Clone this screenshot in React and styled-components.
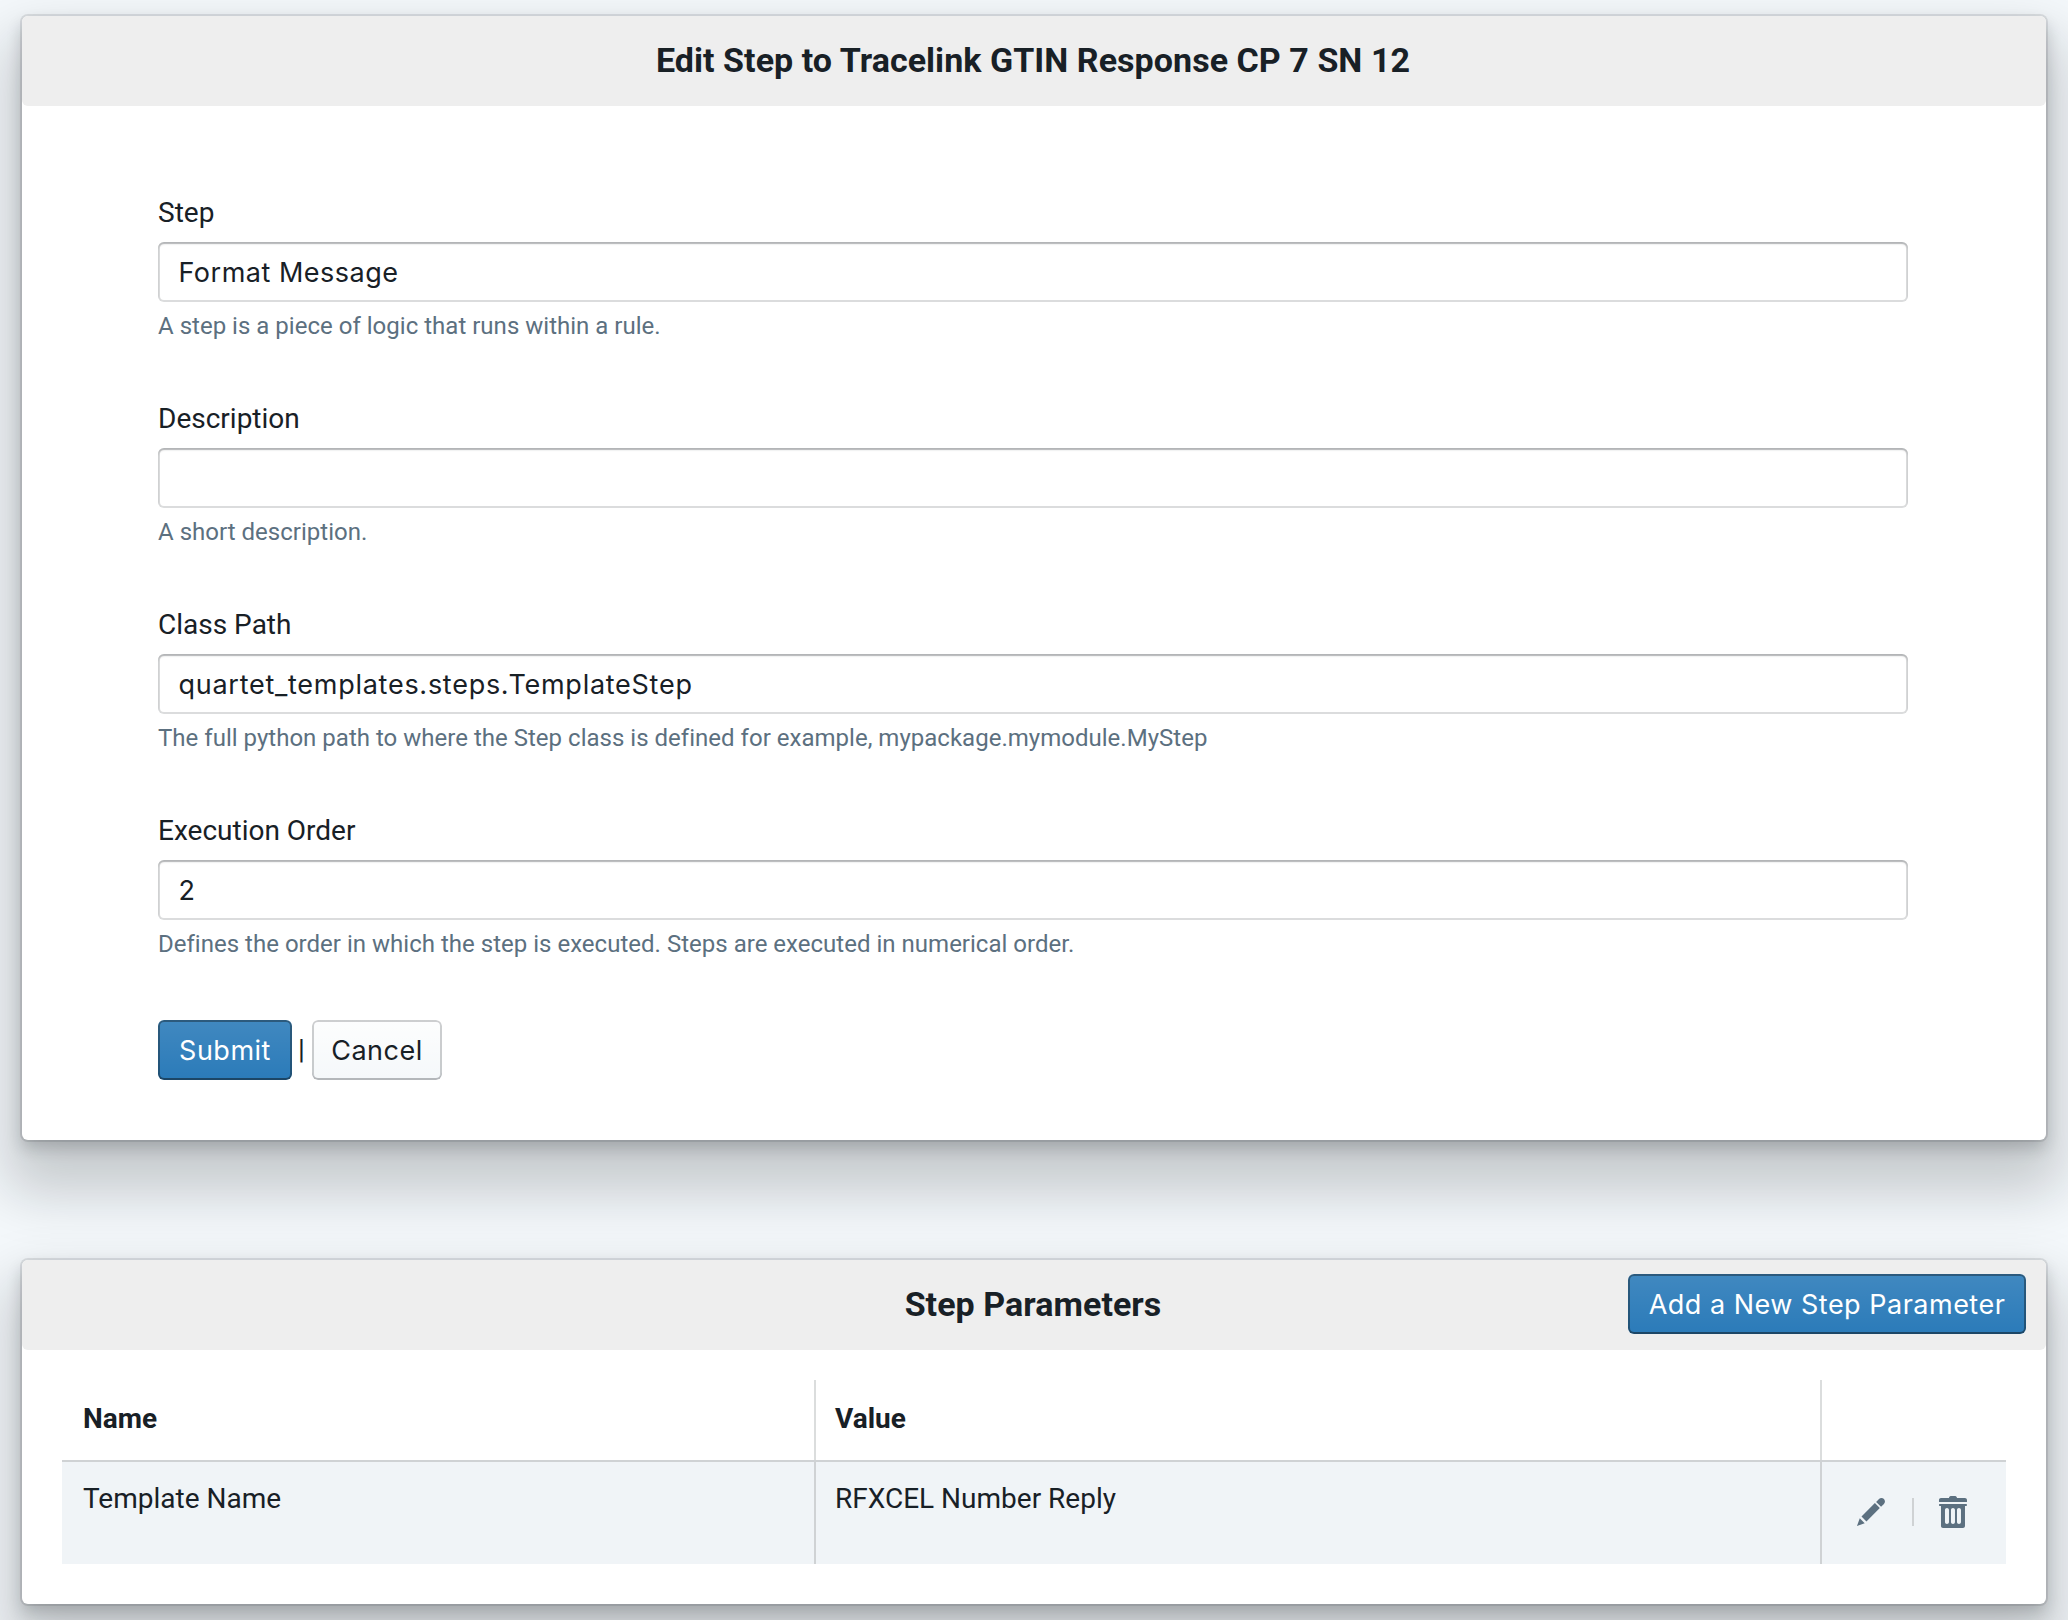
import React from "react";
import styled, { createGlobalStyle, css } from "styled-components";

const GlobalStyle = createGlobalStyle`
  *, *::before, *::after { box-sizing: border-box; }
  body {
    margin: 0;
    background: #f4f8fb;
    color: #182026;
    font-family: Roboto, "Noto Sans", sans-serif;
    font-size: 28px;
    line-height: 36px;
  }
`;

const Page = styled.main`
  display: flex;
  flex-direction: column;
  gap: 120px;
  height: 1620px;
  padding: 16px 22px 0;
  overflow: hidden;
`;

const Card = styled.section`
  flex: none;
  height: ${(p) => p.$height}px;
  border-radius: 6px;
  background: #fff;
  box-shadow:
    0 0 0 2px rgba(16, 22, 26, 0.1),
    0 8px 16px rgba(16, 22, 26, 0.2),
    0 36px 56px 16px rgba(16, 22, 26, 0.2);
`;

const CardHeader = styled.header`
  display: grid;
  grid-template-columns: 1fr auto 1fr;
  align-items: center;
  height: 90px;
  padding: 0 20px 2px;
  border-radius: 6px;
  background: #eee;
`;

const Title = styled.h5`
  grid-column: 2;
  margin: 0 2px 0 0;
  font-size: 34px;
  line-height: 40px;
  font-weight: 700;
  letter-spacing: 0.05px;
`;

const HeaderAction = styled.div`
  display: flex;
  justify-content: flex-end;
`;

const Form = styled.form`
  padding: 88px 138px 0 136px;
`;

const Field = styled.div`
  display: flex;
  flex-direction: column;
  height: 206px;
`;

const Label = styled.label`
  height: 48px;
  padding-top: 1px;
`;

const controlText = css`
  font-family: Inter, "Liberation Sans", sans-serif;
  font-size: 27px;
  letter-spacing: ${(p) => p.$tracking ?? 0.5}px;
`;

const Input = styled.input`
  ${controlText}
  height: 60px;
  padding: 0 20px 0 20.5px;
  border: 0;
  border-radius: 6px;
  outline: 0;
  background: #fff;
  color: #182026;
  box-shadow:
    inset 0 0 0 2px rgba(16, 22, 26, 0.15),
    inset 0 2px 2px rgba(16, 22, 26, 0.2);
`;

const Help = styled.div`
  margin-top: 8px;
  color: #5c7080;
  font-size: 24px;
  line-height: 32px;
  letter-spacing: 0.015px;
`;

const Actions = styled.div`
  display: flex;
  align-items: center;
  margin-top: 2px;
`;

const Separator = styled.span`
  width: 20px;
  padding-right: 1px;
  text-align: center;
`;

const Button = styled.button`
  ${controlText}
  width: ${(p) => p.$width}px;
  height: 60px;
  padding: 0;
  border: 0;
  border-radius: 6px;
  white-space: nowrap;
  ${(p) =>
    p.$primary
      ? css`
          color: #fff;
          background: #2b7bb9 linear-gradient(rgba(255, 255, 255, 0.1), rgba(255, 255, 255, 0));
          box-shadow:
            inset 0 0 0 2px rgba(16, 22, 26, 0.4),
            inset 0 -2px 0 rgba(16, 22, 26, 0.2);
        `
      : css`
          color: #182026;
          background: #f5f8fa linear-gradient(rgba(255, 255, 255, 0.8), rgba(255, 255, 255, 0));
          box-shadow:
            inset 0 0 0 2px rgba(16, 22, 26, 0.2),
            inset 0 -2px 0 rgba(16, 22, 26, 0.1);
        `}
`;

const Table = styled.table`
  width: 1944px;
  margin: 30px 0 0 40px;
  border-spacing: 0;
  table-layout: fixed;
`;

const HeadCell = styled.th`
  width: ${(p) => p.$width}px;
  height: 80px;
  padding: 0 21px 2px;
  text-align: left;
  vertical-align: middle;
  font-weight: 700;
  box-shadow: ${(p) => (p.$divided ? "inset 2px 0 0 #dbdddd" : "none")};
`;

const Cell = styled.td`
  height: 104px;
  padding: 21px 21px 0;
  vertical-align: top;
  background: #f0f4f7;
  box-shadow:
    inset 0 2px 0 #cfd2d4
    ${(p) => (p.$divided ? ", inset 2px 0 0 #cfd2d4" : "")};
`;

const RowTools = styled.div`
  display: flex;
  align-items: center;
  gap: 10px;
  height: 60px;
  margin-top: 1px;
`;

const ToolButton = styled.button`
  display: grid;
  place-items: center;
  width: 60px;
  height: 60px;
  padding: 0;
  border: 0;
  background: none;
  color: #5c7080;
`;

const ToolDivider = styled.span`
  width: 2px;
  height: 28px;
  margin: 0 -1px 0 1px;
  background: #cfd2d4;
`;

const Icon = ({ path }) => (
  <svg width="32" height="32" viewBox="0 0 16 16" fill="currentColor" fillRule="evenodd">
    <path d={path} />
  </svg>
);

const EDIT =
  "M3.25 10.26l2.47 2.47 6.69-6.69-2.46-2.48-6.7 6.7zM.99 14.99l3.86-1.39-2.46-2.44-1.4 3.83zm12.25-14c-.48 0-.92.2-1.24.51l-1.44 1.44 2.47 2.47 1.44-1.44c.32-.32.51-.75.51-1.24.01-.95-.77-1.74-1.74-1.74z";
const TRASH =
  "M14.49 3.99h-13c-.28 0-.5.22-.5.5s.22.5.5.5h.5v10c0 .55.45 1 1 1h10c.55 0 1-.45 1-1v-10h.5c.28 0 .5-.22.5-.5s-.22-.5-.5-.5zm-8.5 9c0 .55-.45 1-1 1s-1-.45-1-1v-6c0-.55.45-1 1-1s1 .45 1 1v6zm3 0c0 .55-.45 1-1 1s-1-.45-1-1v-6c0-.55.45-1 1-1s1 .45 1 1v6zm3 0c0 .55-.45 1-1 1s-1-.45-1-1v-6c0-.55.45-1 1-1s1 .45 1 1v6zm2-12h-4c0-.55-.45-1-1-1h-2c-.55 0-1 .45-1 1h-4c-.55 0-1 .45-1 1v1h14v-1c0-.55-.45-1-1-1z";

const FIELDS = [
  { id: "name", label: "Step", value: "Format Message", help: "A step is a piece of logic that runs within a rule." },
  { id: "description", label: "Description", value: "", help: "A short description." },
  {
    id: "path",
    label: "Class Path",
    value: "quartet_templates.steps.TemplateStep",
    tracking: 0.73,
    help: "The full python path to where the Step class is defined for example, mypackage.mymodule.MyStep",
  },
  {
    id: "order",
    label: "Execution Order",
    value: "2",
    help: "Defines the order in which the step is executed. Steps are executed in numerical order.",
  },
];

export default function App() {
  return (
    <>
      <GlobalStyle />
      <Page>
        <Card $height={1124}>
          <CardHeader>
            <Title>Edit Step to Tracelink GTIN Response CP 7 SN 12</Title>
          </CardHeader>
          <Form>
            {FIELDS.map((f) => (
              <Field key={f.id}>
                <Label htmlFor={f.id}>{f.label}</Label>
                <Input id={f.id} defaultValue={f.value} $tracking={f.tracking} />
                <Help>{f.help}</Help>
              </Field>
            ))}
            <Actions>
              <Button type="button" $primary $width={134}>Submit</Button>
              <Separator>|</Separator>
              <Button type="button" $width={130}>Cancel</Button>
            </Actions>
          </Form>
        </Card>

        <Card $height={344}>
          <CardHeader>
            <Title>Step Parameters</Title>
            <HeaderAction>
              <Button type="button" $primary $width={398}>Add a New Step Parameter</Button>
            </HeaderAction>
          </CardHeader>
          <Table>
            <thead>
              <tr>
                <HeadCell $width={752}>Name</HeadCell>
                <HeadCell $width={1006} $divided>Value</HeadCell>
                <HeadCell $width={186} $divided />
              </tr>
            </thead>
            <tbody>
              <tr>
                <Cell>Template Name</Cell>
                <Cell $divided>RFXCEL Number Reply</Cell>
                <Cell $divided>
                  <RowTools>
                    <ToolButton type="button" aria-label="Edit"><Icon path={EDIT} /></ToolButton>
                    <ToolDivider />
                    <ToolButton type="button" aria-label="Delete"><Icon path={TRASH} /></ToolButton>
                  </RowTools>
                </Cell>
              </tr>
            </tbody>
          </Table>
        </Card>
      </Page>
    </>
  );
}
